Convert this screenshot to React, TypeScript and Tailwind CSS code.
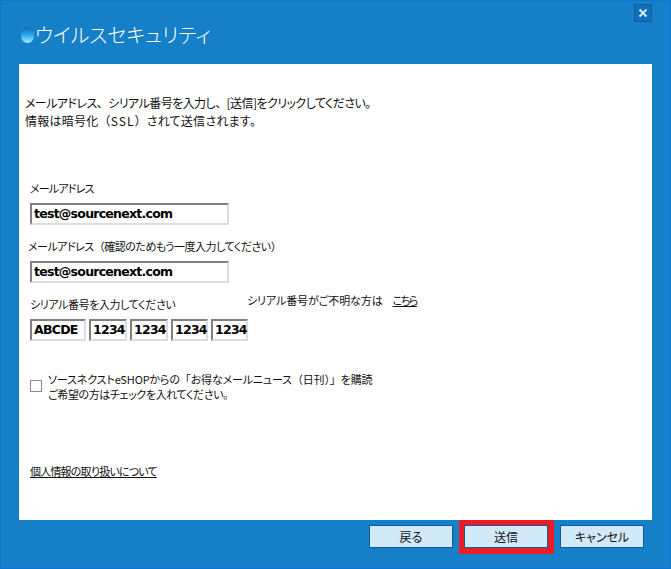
import React from "react";

const wide = "[font-feature-settings:normal]";

function Field({ value }: { value: string }) {
  return (
    <div className="h-[22px] flex items-center pl-[2px] bg-white border-2 border-t-[#808080] border-l-[#808080] border-r-[#dcdcdc] border-b-[#dcdcdc] text-[12.5px] font-bold text-black font-['DejaVu_Sans',sans-serif] tracking-[-0.75px] [font-feature-settings:normal]">
      {value}
    </div>
  );
}

function Btn({ label }: { label: string }) {
  return (
    <div className="w-[84px] h-[23px] flex items-center justify-center bg-[#d2e9f9] border border-[#0a5da5] text-[12px] text-[#111]">
      {label}
    </div>
  );
}

export default function App() {
  return (
    <div className="w-[671px] h-[569px] flex flex-col bg-[#1580c8] border border-[#0a78d2] overflow-hidden font-['Noto_Sans_CJK_JP','Noto_Sans',sans-serif] [font-feature-settings:'palt']">
      <div className="h-[63px] flex flex-col shrink-0">
        <div className="flex justify-end pt-[3px] pr-[18px]">
          <div className="w-[18px] h-[18px] flex items-center justify-center bg-[#0f70b8] border border-[#0b5fa6]">
            <svg width="10" height="10" viewBox="0 0 10 10">
              <path d="M1.5 1.5 L8.5 8.5 M8.5 1.5 L1.5 8.5" stroke="#d8ecf8" strokeWidth="2" />
            </svg>
          </div>
        </div>
        <div className="flex items-center pl-[20px] mt-[1px]">
          <div className="w-[13px] h-[16px] rounded-full bg-gradient-to-b from-[#1468b8] via-[#2aa4f0] to-[#a0f0ff]" />
          <div className="ml-[1px] text-[20px] leading-[24px] text-white font-light">ウイルスセキュリティ</div>
        </div>
      </div>

      <div className="mx-[18px] h-[456px] shrink-0 bg-white pl-[6px] pt-[30px] text-[12px] leading-[18px] text-[#111]">
        <div className="tracking-[-0.55px]">
          メールアドレス<span className={wide}>、</span>シリアル番号を入力し<span className={wide}>、</span>[送信]をクリックしてください。
        </div>
        <div className="tracking-[0.25px]">
          情報は暗号化<span className={wide}>（</span><span className="tracking-[1px]">SSL</span><span className={wide}>）</span>されて送信されます。
        </div>

        <div className="ml-[5px] mt-[49px] text-[11px] tracking-[-0.8px]">メールアドレス</div>
        <div className="ml-[5px] mt-[6px] w-[199px]"><Field value="test@sourcenext.com" /></div>
        <div className="ml-[3px] mt-[12px] text-[11px] tracking-[-0.5px]">
          メールアドレス<span className={wide}>（</span>確認のためもう一度入力してください<span className={wide}>）</span>
        </div>
        <div className="ml-[5px] mt-[6px] w-[199px]"><Field value="test@sourcenext.com" /></div>

        <div className="flex ml-[5px] mt-[8px] h-[24px] text-[11px]">
          <div className="w-[217px] pt-[4px] tracking-[-0.4px]">シリアル番号を入力してください</div>
          <div className="flex">
            <span className="tracking-[-0.1px]">シリアル番号がご不明な方は</span>
            <span className="ml-[10px] underline tracking-[-1.5px]">こちら</span>
          </div>
        </div>
        <div className="flex ml-[5px] mt-[4px] gap-[3px]">
          <div className="w-[56px]"><Field value="ABCDE" /></div>
          <div className="w-[38px]"><Field value="1234" /></div>
          <div className="w-[38px]"><Field value="1234" /></div>
          <div className="w-[37px]"><Field value="1234" /></div>
          <div className="w-[37px]"><Field value="1234" /></div>
        </div>

        <div className="flex ml-[5px] mt-[31px]">
          <div className="w-[12px] h-[12px] mt-[8px] bg-white border border-[#8a8a8a]" />
          <div className="ml-[6px] leading-[15px] text-[11px]">
            <div className="tracking-[-0.15px]">
              ソースネクストeSHOPからの<span className={wide}>「</span>お得なメールニュース<span className={wide}>（</span>日刊<span className={wide}>）」</span>を購読
            </div>
            <div className="tracking-[-0.4px]">ご希望の方はチェックを入れてください。</div>
          </div>
        </div>

        <div className="ml-[5px] mt-[60px] underline text-[11px] tracking-[-0.8px]">個人情報の取り扱いについて</div>
      </div>

      <div className="flex justify-end items-start pr-[26px] gap-[6px]">
        <div className="mt-[5px]"><Btn label="戻る" /></div>
        <div className="w-[95px] h-[34px] border-t-[5px] border-b-[6px] border-l-[5px] border-r-[6px] border-[#ed1c24]">
          <Btn label="送信" />
        </div>
        <div className="mt-[5px]"><Btn label="キャンセル" /></div>
      </div>
    </div>
  );
}
